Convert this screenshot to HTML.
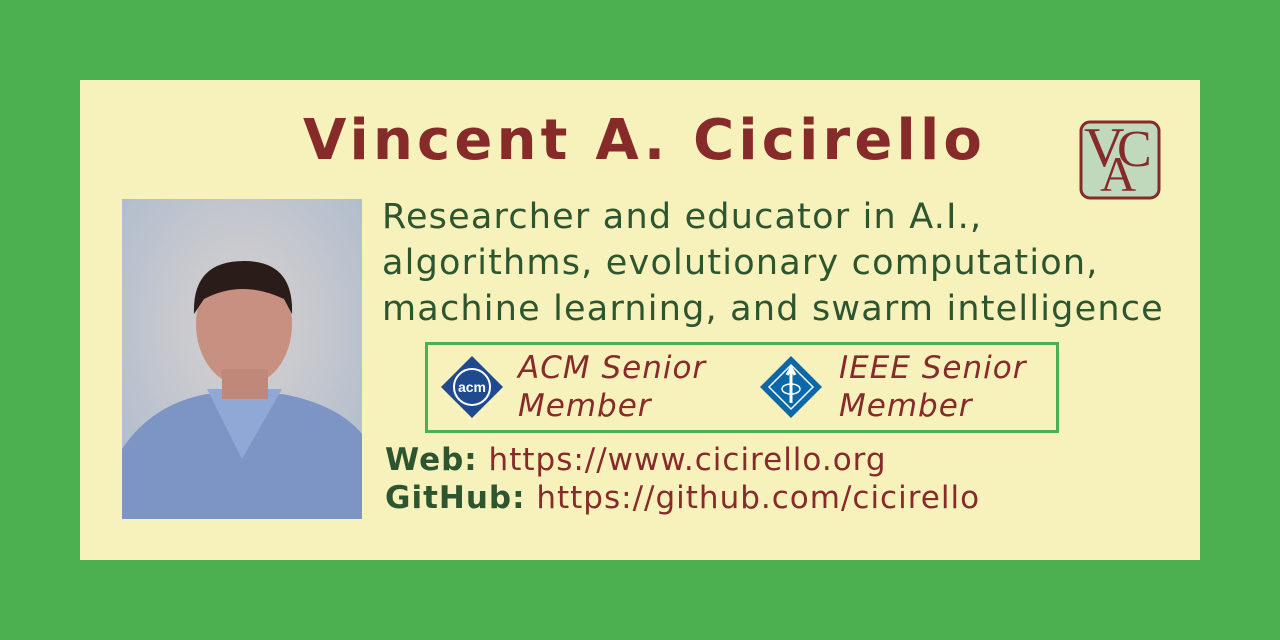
<!DOCTYPE html>
<html><head><meta charset="utf-8"><style>
body{margin:0;width:1280px;height:640px;background:#4caf50;position:relative;overflow:hidden;font-family:"DejaVu Sans",sans-serif}
.card{position:absolute;left:80px;top:80px;width:1120px;height:480px;background:#f7f1bb}
.t{position:absolute;white-space:nowrap}
h1{position:absolute;left:303px;top:108px;margin:0;font:bold 56px "DejaVu Sans",sans-serif;color:#862a2a;white-space:nowrap;letter-spacing:4.2px}
.desc{left:382px;top:194px;font-size:35px;line-height:46px;color:#2c5530;letter-spacing:1.2px}
.box{position:absolute;left:425px;top:342px;width:628px;height:85px;border:3px solid #4caf50}
.mem{font-style:italic;font-size:31px;line-height:38px;color:#862a2a;letter-spacing:1px}
.lnk{font-size:31px;color:#862a2a;left:385px;letter-spacing:1px}
.lnk b{color:#2c5530}
</style></head><body>
<div class="card"></div>
<h1>Vincent A. Cicirello</h1>
<svg style="position:absolute;left:1079px;top:120px" width="82" height="80" viewBox="0 0 82 80">
<rect x="2" y="2" width="78" height="76" rx="9" fill="#c0d8bc" stroke="#862a2a" stroke-width="3"/>
<text x="5" y="46" font-family="Liberation Serif" font-size="56" fill="#862a2a">V</text>
<text x="38" y="46" font-family="Liberation Serif" font-size="52" fill="#862a2a">C</text>
<text x="21" y="71" font-family="Liberation Serif" font-size="50" fill="#862a2a">A</text>
</svg>
<svg style="position:absolute;left:122px;top:199px" width="240" height="320">
<defs><radialGradient id="bg" cx="0.5" cy="0.4" r="0.8"><stop offset="0" stop-color="#d8d2d0"/><stop offset="1" stop-color="#a8b8cc"/></radialGradient></defs>
<rect width="240" height="320" fill="url(#bg)"/>
<path d="M0 250 Q30 205 85 195 L160 195 Q215 205 240 235 L240 320 L0 320Z" fill="#7c95c5"/>
<path d="M85 190 L120 260 L160 190Z" fill="#90a8d6"/>
<ellipse cx="122" cy="125" rx="48" ry="62" fill="#c89080"/>
<path d="M72 115 Q70 62 122 62 Q172 62 170 115 L162 100 Q120 80 82 100Z" fill="#2a1c18"/>
<rect x="100" y="170" width="46" height="30" fill="#c08878"/>
</svg>
<div class="t desc">Researcher and educator in A.I.,<br>algorithms, evolutionary computation,<br>machine learning, and swarm intelligence</div>
<div class="box"></div>
<svg style="position:absolute;left:440px;top:355px" width="64" height="64" viewBox="0 0 64 64">
<path d="M32 1 L63 32 L32 63 L1 32Z" fill="#1f4b8e"/><circle cx="32" cy="32" r="18" fill="#1f4b8e" stroke="#fff" stroke-width="2"/>
<text x="32" y="37" text-anchor="middle" font-family="Liberation Sans" font-weight="bold" font-size="14" fill="#fff">acm</text></svg>
<div class="t mem" style="left:518px;top:349px">ACM Senior<br>Member</div>
<svg style="position:absolute;left:759px;top:355px" width="64" height="64" viewBox="0 0 64 64">
<path d="M32 1 L63 32 L32 63 L1 32Z" fill="#0a68a8"/><path d="M32 10 L54 32 L32 54 L10 32Z" fill="none" stroke="#fff" stroke-width="1.5"/>
<path d="M32 14 L32 48 M28 20 L32 13 L36 20" stroke="#fff" stroke-width="3" fill="none"/>
<ellipse cx="32" cy="34" rx="9" ry="5" fill="none" stroke="#fff" stroke-width="1.5"/></svg>
<div class="t mem" style="left:839px;top:349px">IEEE Senior<br>Member</div>
<div class="t lnk" style="top:442px"><b>Web:</b> https://www.cicirello.org</div>
<div class="t lnk" style="top:480px"><b>GitHub:</b> https://github.com/cicirello</div>
</body></html>
